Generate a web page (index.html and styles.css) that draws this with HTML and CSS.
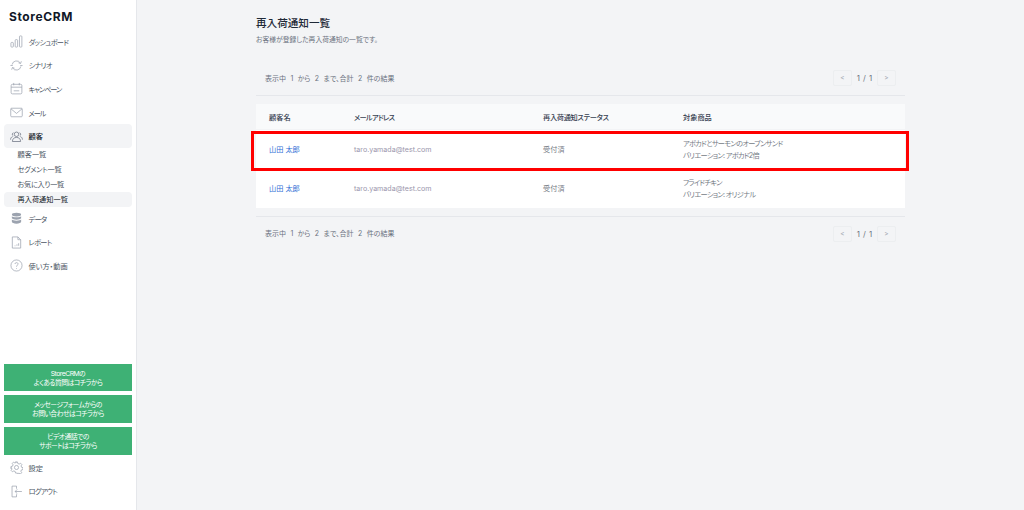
FILE: index.html
```html
<!DOCTYPE html>
<html lang="ja">
<head>
<meta charset="utf-8">
<title>再入荷通知一覧</title>
<link rel="stylesheet" href="styles.css">
</head>
<body>
<div class="app">
  <aside class="sidebar">
    <div class="logo">StoreCRM</div>
    <nav class="nav">
      <a class="item"><svg class="ic" viewBox="0 0 14 14"><rect x="1" y="8" width="2.600" height="5" rx=".8"/><rect x="5.600" y="5" width="2.600" height="8" rx=".8"/><rect x="10.200" y="1" width="2.600" height="12" rx=".8"/></svg><span class="kana">ダッシュボード</span></a>
      <a class="item"><svg class="ic" viewBox="0 0 14 14"><path d="M2.300 6A4.800 4.800 0 0 1 11.200 4.500M12.200 2.500l-.8 2.300-2.300-.7M11.700 8A4.800 4.800 0 0 1 2.800 9.500M1.800 11.500l.8-2.300 2.300.7M.5 7h2.500M11 7h2.500"/></svg><span class="kana">シナリオ</span></a>
      <a class="item"><svg class="ic" viewBox="0 0 14 14"><rect x="1.200" y="2.500" width="11.600" height="10.300" rx="1.400"/><path d="M1.200 5.600h11.600M4 1v2.600M10 1v2.600M4 9.500h6"/></svg><span class="kana wide">キャンペーン</span></a>
      <a class="item"><svg class="ic" viewBox="0 0 14 14"><rect x=".8" y="2.400" width="12.400" height="9.200" rx="1"/><path d="M1 3l6 5 6-5"/></svg><span class="kana wide">メール</span></a>
      <a class="item active"><svg class="ic dark" viewBox="0 0 14 14"><circle cx="7" cy="4.600" r="2.400"/><path d="M2.600 12.400c0-2.800 1.800-4.400 4.400-4.400s4.400 1.600 4.400 4.400zM3.500 6.200A1.700 1.700 0 0 1 3.800 3M10.500 6.200A1.700 1.700 0 0 0 10.200 3M.6 10.400c0-1.700.9-2.900 2.300-3.300M13.400 10.400c0-1.700-.9-2.900-2.300-3.300"/></svg>顧客</a>
      <div class="sub">
        <a class="subitem">顧客一覧</a>
        <a class="subitem tight">セグメント一覧</a>
        <a class="subitem tight">お気に入り一覧</a>
        <a class="subitem current">再入荷通知一覧</a>
      </div>
      <a class="item"><svg class="ic solid" viewBox="0 0 14 14"><ellipse cx="7" cy="2.800" rx="5" ry="2"/><path d="M2 4.600c1 1.500 9 1.500 10 0v2.200c-1 2-9 2-10 0zM2 8.200c1 1.500 9 1.500 10 0v2.400c0 1.200-2.200 2-5 2s-5-.8-5-2z"/></svg><span class="kana">データ</span></a>
      <a class="item"><svg class="ic" viewBox="0 0 14 14"><path d="M2.500 1h6l3 3v9h-9zM8.500 1v3h3M5 10.500h.8M7.500 10.500V9M9.300 10.500V7.800"/></svg><span class="kana">レポート</span></a>
      <a class="item"><svg class="ic" viewBox="0 0 14 14"><circle cx="7" cy="7" r="6"/><path d="M5.300 5.400C5.400 4.400 6.100 3.900 7 3.900c1 0 1.700.6 1.700 1.500C8.700 6.600 7 6.700 7 8.300M7 9.700v.8"/></svg>使い方・動画</a>
    </nav>
    <div class="cta-group">
      <a class="cta">StoreCRMの<br>よくある質問はコチラから</a>
      <a class="cta">メッセージフォームからの<br>お問い合わせはコチラから</a>
      <a class="cta">ビデオ通話での<br>サポートはコチラから</a>
    </div>
    <div class="foot">
      <a class="item"><svg class="ic" viewBox="0 0 14 14"><circle cx="7" cy="7" r="2.200"/><path d="M6 1h2l.4 1.700 1.500.6 1.500-.9 1.400 1.400-.9 1.500.6 1.500 1.500.4v2l-1.700.4-.6 1.500.9 1.500-1.400 1.400-1.500-.9-1.500.6L8 13H6l-.4-1.700-1.500-.6-1.500.9-1.400-1.400.9-1.500-.6-1.500L1 8V6l1.700-.4.6-1.500-.9-1.500 1.400-1.400 1.500.9 1.500-.6z"/></svg>設定</a>
      <a class="item"><svg class="ic" viewBox="0 0 14 14"><path d="M7 4V1.200H2.200v11.600H7V10M12.800 7H5.500M7.800 4.700L5.500 7l2.300 2.300"/></svg><span class="kana">ログアウト</span></a>
    </div>
  </aside>
  <main class="main">
    <h1 class="title">再入荷通知一覧</h1>
    <p class="desc">お客様が登録した再入荷通知の一覧です。</p>
    <div class="pager pager-top">
      <span class="count">表示中 <b>1</b> から <b>2</b> まで、合計 <b>2</b> 件の結果</span>
      <span class="pages"><span class="pbtn">&lt;</span><span class="pnum">1 / 1</span><span class="pbtn">&gt;</span></span>
    </div>
    <div class="table">
      <div class="row head">
        <div class="c1">顧客名</div><div class="c2 kana">メールアドレス</div><div class="c3 tight">再入荷通知ステータス</div><div class="c4">対象商品</div>
      </div>
      <div class="row body first">
        <div class="c1 link">山田 太郎</div><div class="c2 mail">taro.yamada@test.com</div><div class="c3">受付済</div><div class="c4 product">アボカドとサーモンのオープンサンド<br>バリエーション: アボカド2倍</div>
      </div>
      <div class="row body">
        <div class="c1 link">山田 太郎</div><div class="c2 mail">taro.yamada@test.com</div><div class="c3">受付済</div><div class="c4 product">フライドチキン<br>バリエーション: オリジナル</div>
      </div>
      <div class="highlight"></div>
    </div>
    <div class="pager pager-bottom">
      <span class="count">表示中 <b>1</b> から <b>2</b> まで、合計 <b>2</b> 件の結果</span>
      <span class="pages"><span class="pbtn">&lt;</span><span class="pnum">1 / 1</span><span class="pbtn">&gt;</span></span>
    </div>
  </main>
</div>
</body>
</html>
```
FILE: styles.css
```css
* { box-sizing: border-box; }
html, body { margin: 0; height: 100%; }
body {
  font-family: "Inter", "Noto Sans CJK JP", sans-serif;
  font-feature-settings: "palt";
  background: #f3f4f6;
  color: #374151;
  overflow: hidden;
}
a { display: block; color: inherit; text-decoration: none; }
.app { display: flex; height: 510px; }

.sidebar {
  width: 137px;
  flex: none;
  background: #fff;
  border-right: 1px solid #e5e7eb;
  display: flex;
  flex-direction: column;
  padding: 0 4px 7px;
}
.logo {
  font-size: 12px;
  line-height: 15px;
  font-weight: 700;
  color: #111827;
  padding: 8.500px 0 0 5px;
  letter-spacing: .6px;
  height: 30px;
}
.nav { display: flex; flex-direction: column; }
.item {
  display: flex;
  align-items: center;
  gap: 6px;
  height: 23.600px;
  padding-left: 5.500px;
  font-size: 7.200px;
  color: #4b5563;
  border-radius: 4px;
}
.item.active { background: #f3f4f6; color: #111827; font-weight: 500; }
.kana { letter-spacing: -.7px; }
.kana.wide { letter-spacing: -1.100px; }
.tight { letter-spacing: -.3px; }
.ic {
  width: 13px;
  height: 13px;
  flex: none;
  fill: none;
  stroke: #9ca3af;
  stroke-width: .8;
}
.ic.dark { stroke: #6b7280; }
.ic.solid { fill: #9ca3af; stroke: none; }
.sub { display: flex; flex-direction: column; margin-top: -1px; }
.subitem {
  height: 15px;
  line-height: 15px;
  padding-left: 13.500px;
  font-size: 7.200px;
  color: #4b5563;
  border-radius: 4px;
}
.subitem.current { background: #f3f4f6; color: #111827; }
.cta-group {
  margin-top: auto;
  display: flex;
  flex-direction: column;
  gap: 4.200px;
}
.cta {
  height: 27.600px;
  background: #3eb175;
  color: #fff;
  font-size: 6.800px;
  letter-spacing: -.5px;
  line-height: 9px;
  text-align: center;
  padding-top: 5px;
}
.foot { display: flex; flex-direction: column; padding-top: 1px; }

.main { flex: 1; padding: 17px 119px 0 119px; min-width: 0; }
.title {
  margin: 0;
  font-size: 10.600px;
  line-height: 14px;
  font-weight: 500;
  color: #1f2937;
}
.desc {
  margin: 4px 0 0;
  font-size: 6.800px;
  line-height: 10px;
  color: #6b7280;
}
.pager {
  display: flex;
  justify-content: space-between;
  align-items: center;
  padding-left: 9px;
  color: #6b7280;
}
.pager-top {
  margin-top: 15px;
  border-bottom: 1px solid #e5e7eb;
  height: 36px;
}
.pager-bottom {
  margin-top: 8px;
  border-top: 1px solid #e5e7eb;
  height: 33px;
}
.count { font-size: 7px; word-spacing: 1.400px; }
.count b { font-weight: 400; margin: 0 1px; }
.pages { display: flex; align-items: center; padding-right: 9px; margin-top: 1px; }
.pbtn {
  width: 19px;
  height: 16px;
  border: 1px solid #eceef0;
  border-radius: 2px;
  background: #f3f4f6;
  color: #a5abb5;
  font-size: 6.500px;
  display: flex;
  align-items: center;
  justify-content: center;
}
.pnum { width: 25px; text-align: center; font-size: 7.800px; word-spacing: 1px; color: #6b7280; }

.table { position: relative; margin-top: 8px; }
.row { display: flex; align-items: center; font-size: 7.200px; }
.head { height: 25px; background: #f9fafb; font-weight: 500; color: #374151; }
.body { height: 39px; background: #fff; color: #757b85; line-height: 12px; }
.first { margin-top: 1px; }
.c1 { width: 85px; padding-left: 13px; flex: none; }
.c2 { width: 202px; flex: none; padding-left: 13px; }
.c3 { width: 140px; flex: none; }
.c4 { flex: 1; }
.product { letter-spacing: -.7px; }
.link { color: #2f6fd6; }
.mail { color: #9a96ac; font-size: 7.100px; }
.highlight {
  position: absolute;
  left: -5px;
  top: 27px;
  width: 658px;
  height: 40px;
  border: 3px solid #f00;
  pointer-events: none;
}
```
